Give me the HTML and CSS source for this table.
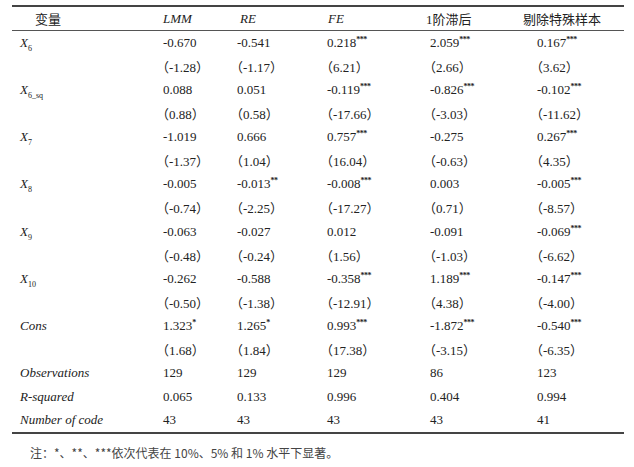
FILE: index.html
```html
<!DOCTYPE html>
<html lang="zh">
<head>
<meta charset="utf-8">
<link rel="stylesheet" href="styles.css">
</head>
<body>
<div class="page">
<table class="reg">
<colgroup>
<col class="c1"><col class="c2"><col class="c3"><col class="c4"><col class="c5"><col class="c6">
</colgroup>
<thead>
<tr>
<th class="h-var">变量</th>
<th class="it">LMM</th>
<th class="it h-re">RE</th>
<th class="it h-fe">FE</th>
<th class="h-lag">1阶滞后</th>
<th class="h-ex">剔除特殊样本</th>
</tr>
</thead>
<tbody>
<tr><td><i>X</i><sub>6</sub></td><td>-0.670</td><td>-0.541</td><td>0.218<sup>***</sup></td><td>2.059<sup>***</sup></td><td>0.167<sup>***</sup></td></tr>
<tr class="t"><td></td><td>（-1.28）</td><td>（-1.17）</td><td>（6.21）</td><td>（2.66）</td><td>（3.62）</td></tr>
<tr><td><i>X</i><sub>6_sq</sub></td><td>0.088</td><td>0.051</td><td>-0.119<sup>***</sup></td><td>-0.826<sup>***</sup></td><td>-0.102<sup>***</sup></td></tr>
<tr class="t"><td></td><td>（0.88）</td><td>（0.58）</td><td>（-17.66）</td><td>（-3.03）</td><td>（-11.62）</td></tr>
<tr><td><i>X</i><sub>7</sub></td><td>-1.019</td><td>0.666</td><td>0.757<sup>***</sup></td><td>-0.275</td><td>0.267<sup>***</sup></td></tr>
<tr class="t"><td></td><td>（-1.37）</td><td>（1.04）</td><td>（16.04）</td><td>（-0.63）</td><td>（4.35）</td></tr>
<tr><td><i>X</i><sub>8</sub></td><td>-0.005</td><td>-0.013<sup>**</sup></td><td>-0.008<sup>***</sup></td><td>0.003</td><td>-0.005<sup>***</sup></td></tr>
<tr class="t"><td></td><td>（-0.74）</td><td>（-2.25）</td><td>（-17.27）</td><td>（0.71）</td><td>（-8.57）</td></tr>
<tr><td><i>X</i><sub>9</sub></td><td>-0.063</td><td>-0.027</td><td>0.012</td><td>-0.091</td><td>-0.069<sup>***</sup></td></tr>
<tr class="t"><td></td><td>（-0.48）</td><td>（-0.24）</td><td>（1.56）</td><td>（-1.03）</td><td>（-6.62）</td></tr>
<tr><td><i>X</i><sub>10</sub></td><td>-0.262</td><td>-0.588</td><td>-0.358<sup>***</sup></td><td>1.189<sup>***</sup></td><td>-0.147<sup>***</sup></td></tr>
<tr class="t"><td></td><td>（-0.50）</td><td>（-1.38）</td><td>（-12.91）</td><td>（4.38）</td><td>（-4.00）</td></tr>
<tr><td><i>Cons</i></td><td>1.323<sup>*</sup></td><td>1.265<sup>*</sup></td><td>0.993<sup>***</sup></td><td>-1.872<sup>***</sup></td><td>-0.540<sup>***</sup></td></tr>
<tr class="t"><td></td><td>（1.68）</td><td>（1.84）</td><td>（17.38）</td><td>（-3.15）</td><td>（-6.35）</td></tr>
<tr><td><i>Observations</i></td><td>129</td><td>129</td><td>129</td><td>86</td><td>123</td></tr>
<tr><td><i>R-squared</i></td><td>0.065</td><td>0.133</td><td>0.996</td><td>0.404</td><td>0.994</td></tr>
<tr class="last"><td><i>Number of code</i></td><td>43</td><td>43</td><td>43</td><td>43</td><td>41</td></tr>
</tbody>
</table>
<p class="note">注：*、**、***依次代表在 10%、5% 和 1% 水平下显著。</p>
</div>
</body>
</html>
```
FILE: styles.css
```css
html, body {
  margin: 0;
  padding: 0;
  background: #fff;
}
.page {
  padding: 5px 10px 0 12px;
  font-family: "Liberation Serif", "Noto Sans CJK SC", serif;
  color: #222;
}
.reg {
  width: 612px;
  border-collapse: collapse;
  table-layout: fixed;
  font-size: 13px;
  border-top: 2px solid #444;
  border-bottom: 2px solid #444;
}
.c1 { width: 143px; }
.c2 { width: 74px; }
.c3 { width: 90px; }
.c4 { width: 103px; }
.c5 { width: 107px; }
.c6 { width: 95px; }
.reg th, .reg td {
  padding: 0 0 0 8px;
  text-align: left;
  white-space: nowrap;
  font-weight: normal;
  vertical-align: middle;
}
.reg thead th {
  height: 23px;
  border-bottom: 1px solid #555;
}
.reg tbody td {
  height: 23.6px;
}
.reg .t td {
  text-indent: -7px;
}
.it { font-style: italic; }
.h-var { padding-left: 23px !important; }
.h-re { padding-left: 11px !important; }
.h-fe { padding-left: 9px !important; }
.h-lag { padding-left: 4px !important; }
.h-ex { padding-left: 0 !important; position: relative; left: -6px; }
.reg sub {
  font-size: 8px;
  vertical-align: -4px;
  line-height: 0;
  font-style: normal;
}
.reg sup {
  font-size: 8px;
  font-weight: bold;
  vertical-align: 5px;
  line-height: 0;
  letter-spacing: -0.5px;
}
.note {
  margin: 10px 0 0 18px;
  font-family: "Noto Sans CJK SC", sans-serif;
  font-size: 12px;
  color: #444;
}
```
